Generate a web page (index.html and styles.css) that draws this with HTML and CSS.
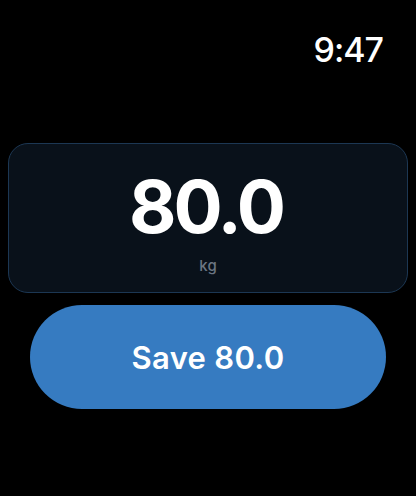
FILE: index.html
```html
<!DOCTYPE html>
<html>
<head>
<meta charset="utf-8">
<link rel="stylesheet" href="styles.css">
</head>
<body>
<div class="screen">
  <div class="status"><span class="time">9:47</span></div>
  <div class="card">
    <div class="value">80.0</div>
    <div class="unit">kg</div>
  </div>
  <button class="save">Save 80.0</button>
</div>
</body>
</html>
```
FILE: styles.css
```css
html, body {
  margin: 0;
  padding: 0;
  background: #000;
}
.screen {
  width: 416px;
  height: 496px;
  background: #000;
  display: flex;
  flex-direction: column;
  font-family: Inter, "Liberation Sans", sans-serif;
  color: #fff;
}
.status {
  display: flex;
  justify-content: flex-end;
  padding: 30px 33px 0 0;
}
.time {
  font-size: 34px;
  line-height: 40px;
  font-weight: 500;
  letter-spacing: -1px;
}
.card {
  margin: 73px 8px 0;
  background: #09111a;
  border: 1px solid #1c3753;
  border-radius: 20px;
  padding: 26px 0 17px;
  display: flex;
  flex-direction: column;
  align-items: center;
}
.value {
  font-size: 73px;
  line-height: 73px;
  font-weight: 700;
  letter-spacing: -3px;
  margin-right: 4px;
}
.unit {
  margin-top: 14px;
  font-size: 15px;
  line-height: 18px;
  font-weight: 500;
  color: #6c7682;
}
.save {
  margin: 12px 30px 0;
  height: 104px;
  border: none;
  border-radius: 52px;
  background: #367bc1;
  color: #fff;
  font-family: Inter, "Liberation Sans", sans-serif;
  font-size: 31px;
  font-weight: 600;
  padding: 0;
  letter-spacing: 0.3px;
}
```
